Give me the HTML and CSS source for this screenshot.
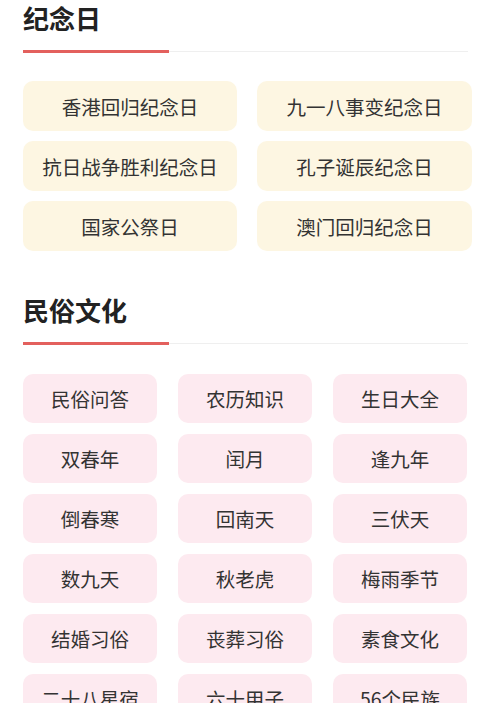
FILE: index.html
```html
<!DOCTYPE html>
<html lang="zh-CN">
<head>
<meta charset="utf-8">
<title>纪念日 · 民俗文化</title>
<link rel="stylesheet" href="styles.css">
</head>
<body>
<div class="page">
  <section class="section">
    <h2 class="title">纪念日</h2>
    <div class="rule"><span class="rule-red"></span><span class="rule-grey"></span></div>
    <div class="grid grid-2">
      <div class="chip chip-cream">香港回归纪念日</div>
      <div class="chip chip-cream">九一八事变纪念日</div>
      <div class="chip chip-cream">抗日战争胜利纪念日</div>
      <div class="chip chip-cream">孔子诞辰纪念日</div>
      <div class="chip chip-cream">国家公祭日</div>
      <div class="chip chip-cream">澳门回归纪念日</div>
    </div>
  </section>
  <section class="section section-second">
    <h2 class="title">民俗文化</h2>
    <div class="rule"><span class="rule-red"></span><span class="rule-grey"></span></div>
    <div class="grid grid-3">
      <div class="chip chip-pink">民俗问答</div>
      <div class="chip chip-pink">农历知识</div>
      <div class="chip chip-pink">生日大全</div>
      <div class="chip chip-pink">双春年</div>
      <div class="chip chip-pink">闰月</div>
      <div class="chip chip-pink">逢九年</div>
      <div class="chip chip-pink">倒春寒</div>
      <div class="chip chip-pink">回南天</div>
      <div class="chip chip-pink">三伏天</div>
      <div class="chip chip-pink">数九天</div>
      <div class="chip chip-pink">秋老虎</div>
      <div class="chip chip-pink">梅雨季节</div>
      <div class="chip chip-pink">结婚习俗</div>
      <div class="chip chip-pink">丧葬习俗</div>
      <div class="chip chip-pink">素食文化</div>
      <div class="chip chip-pink">二十八星宿</div>
      <div class="chip chip-pink">六十甲子</div>
      <div class="chip chip-pink">56个民族</div>
    </div>
  </section>
</div>
</body>
</html>
```
FILE: styles.css
```css
html, body {
  margin: 0;
  padding: 0;
  background: #ffffff;
  overflow: hidden;
}
body {
  font-family: "Noto Sans CJK SC", "Noto Sans", sans-serif;
  color: #333333;
}
.page {
  padding: 0 0 0 23px;
  width: 449px;
}
.section {
  display: flex;
  flex-direction: column;
}
.section-second {
  margin-top: 41px;
}
.title {
  margin: 0;
  height: 36px;
  line-height: 36px;
  font-size: 26px;
  font-weight: 700;
  color: #222222;
}
.rule {
  margin-top: 14px;
  display: flex;
  align-items: center;
  height: 3px;
  width: 445px;
}
.rule-red {
  width: 146px;
  height: 3px;
  background: #e3605d;
  flex: none;
}
.rule-grey {
  flex: 1;
  height: 1px;
  background: #efefef;
}
.grid {
  display: grid;
  margin-top: 28px;
}
.grid-2 {
  grid-template-columns: 214px 215px;
  column-gap: 20px;
  grid-auto-rows: 50px;
  row-gap: 10px;
}
.grid-3 {
  margin-top: 29px;
  grid-template-columns: 134px 134px 134px;
  column-gap: 21px;
  grid-auto-rows: 49px;
  row-gap: 11px;
}
.chip {
  display: flex;
  align-items: center;
  justify-content: center;
  border-radius: 10px;
  font-size: 19.5px;
  color: #333333;
  white-space: nowrap;
}
.chip-cream {
  background: #fdf6e2;
}
.chip-pink {
  background: #fdeaf0;
}
```
